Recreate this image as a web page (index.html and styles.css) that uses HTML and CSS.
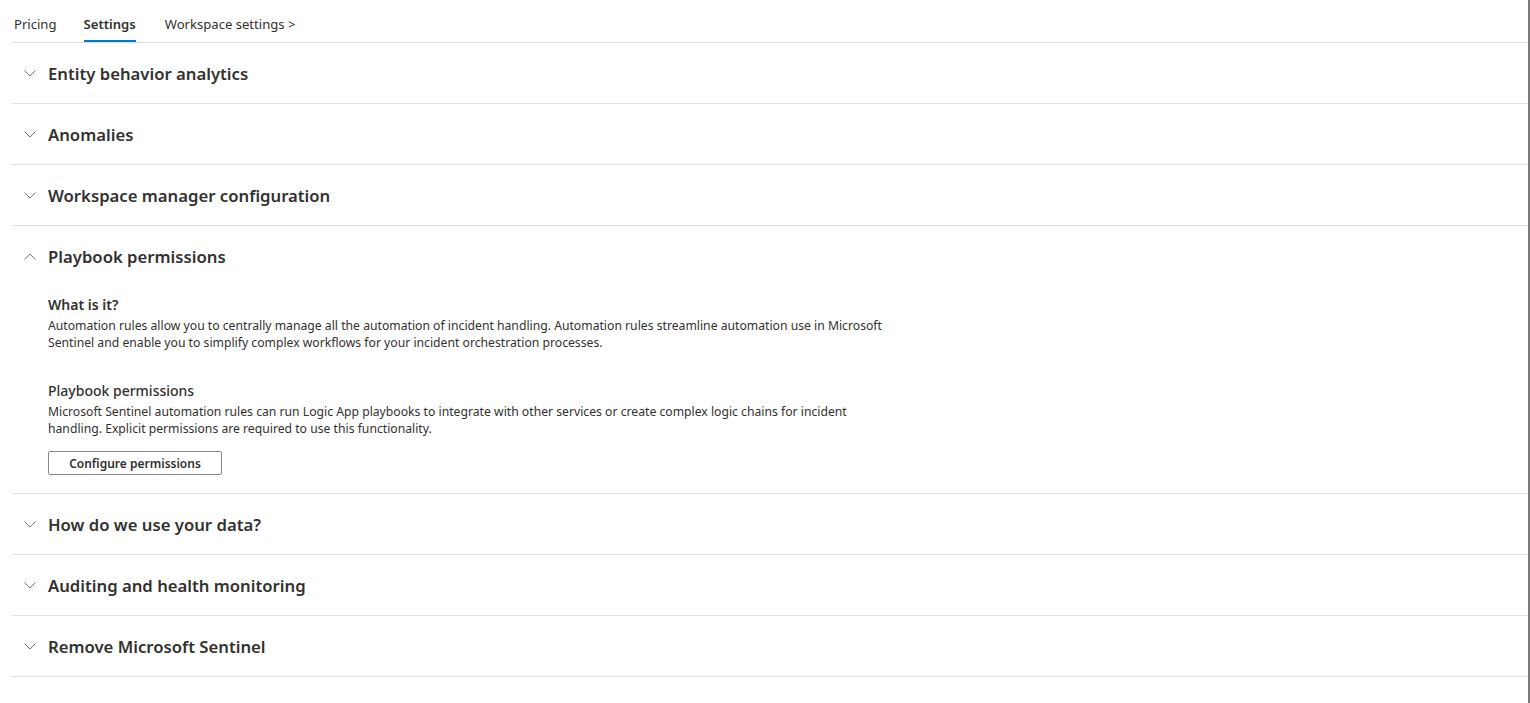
FILE: index.html
```html
<!DOCTYPE html>
<html lang="en">
<head>
    <meta charset="UTF-8">
    <meta name="viewport" content="width=device-width, initial-scale=1.0">
    <title>Settings</title>
    <link rel="stylesheet" href="styles.css">
</head>
<body>
    <div class="page">
        <div class="tabs">
            <a class="tab">Pricing</a>
            <a class="tab active">Settings</a>
            <a class="tab">Workspace settings &gt;</a>
        </div>

        <div class="section">
            <div class="section-header">
                <svg class="chevron" viewBox="0 0 12 7"><path d="M0.5 0.5 L6 6 L11.5 0.5"/></svg>
                <span>Entity behavior analytics</span>
            </div>
        </div>
        <div class="section">
            <div class="section-header">
                <svg class="chevron" viewBox="0 0 12 7"><path d="M0.5 0.5 L6 6 L11.5 0.5"/></svg>
                <span>Anomalies</span>
            </div>
        </div>
        <div class="section">
            <div class="section-header">
                <svg class="chevron" viewBox="0 0 12 7"><path d="M0.5 0.5 L6 6 L11.5 0.5"/></svg>
                <span>Workspace manager configuration</span>
            </div>
        </div>
        <div class="section open">
            <div class="section-header">
                <svg class="chevron" viewBox="0 0 12 7"><path d="M0.5 6.5 L6 1 L11.5 6.5"/></svg>
                <span>Playbook permissions</span>
            </div>
            <div class="section-body">
                <h3>What is it?</h3>
                <p>Automation rules allow you to centrally manage all the automation of incident handling. Automation rules streamline automation use in Microsoft<br>Sentinel and enable you to simplify complex workflows for your incident orchestration processes.</p>
                <h4>Playbook permissions</h4>
                <p>Microsoft Sentinel automation rules can run Logic App playbooks to integrate with other services or create complex logic chains for incident<br>handling. Explicit permissions are required to use this functionality.</p>
                <button class="btn">Configure permissions</button>
            </div>
        </div>
        <div class="section">
            <div class="section-header">
                <svg class="chevron" viewBox="0 0 12 7"><path d="M0.5 0.5 L6 6 L11.5 0.5"/></svg>
                <span>How do we use your data?</span>
            </div>
        </div>
        <div class="section">
            <div class="section-header">
                <svg class="chevron" viewBox="0 0 12 7"><path d="M0.5 0.5 L6 6 L11.5 0.5"/></svg>
                <span>Auditing and health monitoring</span>
            </div>
        </div>
        <div class="section">
            <div class="section-header">
                <svg class="chevron" viewBox="0 0 12 7"><path d="M0.5 0.5 L6 6 L11.5 0.5"/></svg>
                <span>Remove Microsoft Sentinel</span>
            </div>
        </div>
    </div>
</body>
</html>
```

FILE: styles.css
```css
body {
    margin: 0;
    padding: 0;
    background: #fff;
    color: #323130;
    font-family: "Segoe UI", "Noto Sans", sans-serif;
    border-right: 2px solid #7a7a7a;
    min-height: 703px;
    box-sizing: border-box;
}
.page {
    margin-left: 12px;
}
.tabs {
    display: flex;
    height: 42px;
    padding-left: 2px;
    border-bottom: 1px solid #dadce6;
}
.tab {
    display: flex;
    align-items: center;
    font-size: 13.1px;
    margin-right: 27px;
    color: #323130;
    border-bottom: 2px solid transparent;
    padding-top: 8px;
}
.tab.active {
    font-weight: 600;
    border-bottom-color: #0078d4;
    margin-right: 29px;
}
.section {
    border-bottom: 1px solid #dde1e8;
}
.section-header {
    display: flex;
    align-items: center;
    height: 60px;
    padding-left: 12px;
    font-size: 16.7px;
    font-weight: 600;
}
.chevron {
    width: 12px;
    height: 7px;
    margin-right: 12px;
    fill: none;
    stroke: #6f7484;
    stroke-width: 1;
}
.section-body {
    padding: 9px 0 18px 36px;
}
.section-body h3 {
    margin: 0;
    font-size: 14px;
    font-weight: 600;
    line-height: 20px;
}
.section-body h4 {
    margin: 30px 0 0;
    font-size: 14px;
    font-weight: 500;
    line-height: 20px;
}
.section-body p {
    margin: 2px 0 0;
    font-size: 12.2px;
    line-height: 17px;
    white-space: nowrap;
}
.btn {
    display: block;
    margin-top: 14px;
    width: 174px;
    height: 24px;
    padding: 0;
    background: #fff;
    border: 1px solid #8a8886;
    border-radius: 2px;
    font-family: inherit;
    font-size: 12px;
    font-weight: 600;
    color: #323130;
}
```
